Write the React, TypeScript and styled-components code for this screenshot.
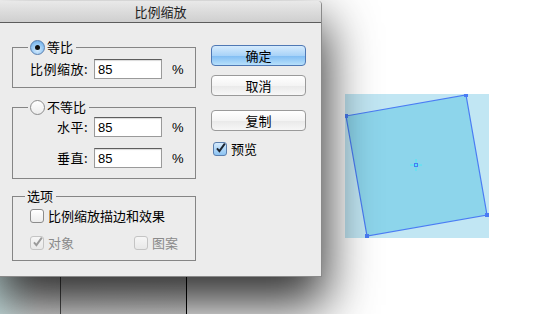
import React from "react";
import styled, { createGlobalStyle, css } from "styled-components";

const GlobalStyle = createGlobalStyle`
  html, body {
    margin: 0;
    padding: 0;
    background: #fff;
  }
  body {
    font-family: "Noto Sans CJK SC", "Liberation Sans", sans-serif;
    font-size: 13px;
    color: #000;
  }
`;

const Workspace = styled.div`
  position: relative;
  width: 534px;
  height: 314px;
  overflow: hidden;
  background: #fff;
`;

const BackPanel = styled.div`
  position: absolute;
  left: 0;
  top: 250px;
  width: 186px;
  height: 64px;
  display: flex;
  border-right: 1px solid #000;
  background: linear-gradient(90deg, #cfe6e6 0, #e8e8e8 40px, #ececec 100%);
`;

const BackColumn = styled.div`
  width: 60px;
  border-right: 1px solid #555;
`;

const Artwork = styled.svg`
  position: absolute;
  left: 345px;
  top: 94px;
`;

const Dialog = styled.div`
  position: absolute;
  left: 0;
  top: 1px;
  width: 321px;
  background: #ececec;
  border-right: 1px solid #8a8a8a;
  border-bottom: 1px solid #8a8a8a;
  border-top-right-radius: 4px;
  box-shadow: 0 24px 50px 4px rgba(0, 0, 0, 0.8);
  z-index: 2;
`;

const TitleBar = styled.div`
  height: 21px;
  display: flex;
  align-items: center;
  justify-content: center;
  border-top-right-radius: 4px;
  background: linear-gradient(#e9e9e9, #cfcfcf);
  border-bottom: 1px solid #5c5c5c;
  font-size: 13px;
  color: #222;
`;

const Body = styled.div`
  display: flex;
  gap: 15px;
  padding: 16px 15px 15px 12px;
`;

const LeftColumn = styled.div`
  width: 184px;
  display: flex;
  flex-direction: column;
`;

const Group = styled.fieldset<{ $mt?: number; $pt: number; $pb: number }>`
  margin: ${(p) => p.$mt ?? 0}px 0 0 0;
  padding: ${(p) => p.$pt}px 0 ${(p) => p.$pb}px 0;
  border: 1px solid #858585;
  min-width: 0;
  display: flex;
  flex-direction: column;
`;

const Legend = styled.legend<{ $ml: number }>`
  margin-left: ${(p) => p.$ml}px;
  padding: 0 3px 0 2px;
  height: 16px;
  line-height: 16px;
  display: flex;
  align-items: center;
  gap: 2px;
  font-size: 13px;
`;

const Radio = styled.span<{ $on?: boolean }>`
  position: relative;
  width: 15px;
  height: 15px;
  border-radius: 50%;
  box-sizing: border-box;
  ${(p) =>
    p.$on
      ? css`
          border: 1px solid #5b7fae;
          background: radial-gradient(circle at 50% 70%, #d9edfd 0, #9fcdf5 45%, #5fa5e6 100%);
          &::after {
            content: "";
            position: absolute;
            left: 4px;
            top: 4px;
            width: 5px;
            height: 5px;
            border-radius: 50%;
            background: #111;
          }
        `
      : css`
          border: 1px solid #8c8c8c;
          background: linear-gradient(#ffffff, #ececec);
        `}
`;

const FieldRow = styled.div<{ $mt?: number }>`
  display: flex;
  align-items: center;
  margin-top: ${(p) => p.$mt ?? 0}px;
`;

const FieldLabel = styled.span`
  width: 75px;
  text-align: right;
  margin-right: 6px;
  font-size: 13px;
  line-height: 20px;
  letter-spacing: 0.5px;
`;

const NumberInput = styled.input`
  width: 68px;
  height: 20px;
  box-sizing: border-box;
  border: 1px solid #9a9a9a;
  border-top-color: #5e5e5e;
  box-shadow: inset 0 1px 1px rgba(0, 0, 0, 0.15);
  padding: 0 0 0 3px;
  margin: 0;
  font-family: "Liberation Sans", sans-serif;
  font-size: 13px;
  color: #000;
  background: #fff;
  outline: none;
`;

const Unit = styled.span`
  margin-left: 10px;
  font-family: "Liberation Sans", sans-serif;
  font-size: 13px;
`;

const CheckRow = styled.div<{ $mt?: number }>`
  display: flex;
  align-items: center;
  margin-top: ${(p) => p.$mt ?? 0}px;
  padding-left: 17px;
`;

const CheckItem = styled.label<{ $disabled?: boolean; $w?: number }>`
  display: flex;
  align-items: center;
  gap: 4px;
  width: ${(p) => (p.$w ? `${p.$w}px` : "auto")};
  font-size: 13px;
  line-height: 16px;
  color: ${(p) => (p.$disabled ? "#8a8a8a" : "#000")};
`;

const Box = styled.span<{ $variant: "off" | "on" | "disabledOn" | "disabledOff" }>`
  width: 14px;
  height: 14px;
  box-sizing: border-box;
  border-radius: 3px;
  display: flex;
  align-items: center;
  justify-content: center;
  overflow: visible;
  ${(p) =>
    p.$variant === "on"
      ? css`
          border: 1px solid #5b7fae;
          background: linear-gradient(#d6ebfd, #8cc3f2);
        `
      : p.$variant === "off"
      ? css`
          border: 1px solid #8c8c8c;
          background: linear-gradient(#ffffff, #ececec);
        `
      : css`
          border: 1px solid #c4c4c4;
          background: linear-gradient(#f6f6f6, #e8e8e8);
        `}
`;

const RightColumn = styled.div`
  width: 95px;
  display: flex;
  flex-direction: column;
  padding-top: 6px;
`;

const Button = styled.button<{ $primary?: boolean; $mt?: number }>`
  height: 21px;
  margin: ${(p) => p.$mt ?? 0}px 0 0 0;
  padding: 0;
  border-radius: 4px;
  font-family: "Noto Sans CJK SC", sans-serif;
  font-size: 13px;
  line-height: 19px;
  color: #000;
  cursor: default;
  ${(p) =>
    p.$primary
      ? css`
          border: 1px solid #4f78b4;
          background: linear-gradient(#d5ebfd 0, #a9d3f8 50%, #7fbcf3 51%, #b7e0fb 100%);
        `
      : css`
          border: 1px solid #9a9a9a;
          background: linear-gradient(#ffffff 0, #f4f4f4 50%, #e9e9e9 51%, #f7f7f7 100%);
        `}
`;

const PreviewRow = styled.label`
  display: flex;
  align-items: center;
  gap: 4px;
  margin-top: 10px;
  padding-left: 2px;
  font-size: 13px;
  line-height: 16px;
`;

const Check = ({ color }: { color: string }) => (
  <svg width="14" height="14" viewBox="0 0 14 14" style={{ marginTop: -3, marginLeft: 1 }}>
    <path d="M2.5 7.5 L5.6 11 L12.5 1.5" fill="none" stroke={color} strokeWidth="2.4" strokeLinejoin="miter" />
  </svg>
);

const corners = "1,22 121,1 142,121 22,142";

export default function App() {
  return (
    <Workspace>
      <GlobalStyle />
      <BackPanel>
        <BackColumn />
      </BackPanel>

      <Artwork width="144" height="144" viewBox="0 0 144 144">
        <rect x="0" y="0" width="144" height="144" fill="#c1e6f3" />
        <polygon points={corners} fill="#8dd5eb" stroke="#4a7cf4" strokeWidth="1.2" />
        {[
          [1, 22],
          [121, 1],
          [142, 121],
          [22, 142],
        ].map(([x, y]) => (
          <rect key={`${x}-${y}`} x={x - 2} y={y - 2} width="4" height="4" fill="#4a7cf4" />
        ))}
        <line x1="71" y1="65" x2="71" y2="77" stroke="#4fe8f5" strokeWidth="1" />
        <line x1="65" y1="71" x2="77" y2="71" stroke="#4fe8f5" strokeWidth="1" />
        <rect x="69.5" y="69.5" width="3" height="3" fill="none" stroke="#4a7cf4" strokeWidth="1" />
      </Artwork>

      <Dialog>
        <TitleBar>比例缩放</TitleBar>
        <Body>
          <LeftColumn>
            <Group $pt={4} $pb={8}>
              <Legend $ml={15}>
                <Radio $on />
                等比
              </Legend>
              <FieldRow>
                <FieldLabel>比例缩放:</FieldLabel>
                <NumberInput defaultValue="85" />
                <Unit>%</Unit>
              </FieldRow>
            </Group>

            <Group $mt={11} $pt={2} $pb={10}>
              <Legend $ml={15}>
                <Radio />
                不等比
              </Legend>
              <FieldRow>
                <FieldLabel>水平:</FieldLabel>
                <NumberInput defaultValue="85" />
                <Unit>%</Unit>
              </FieldRow>
              <FieldRow $mt={11}>
                <FieldLabel>垂直:</FieldLabel>
                <NumberInput defaultValue="85" />
                <Unit>%</Unit>
              </FieldRow>
            </Group>

            <Group $mt={9} $pt={4} $pb={9}>
              <Legend $ml={12}>选项</Legend>
              <CheckRow>
                <CheckItem>
                  <Box $variant="off" />
                  比例缩放描边和效果
                </CheckItem>
              </CheckRow>
              <CheckRow $mt={11}>
                <CheckItem $disabled $w={104}>
                  <Box $variant="disabledOn">
                    <Check color="#9a9a9a" />
                  </Box>
                  对象
                </CheckItem>
                <CheckItem $disabled>
                  <Box $variant="disabledOff" />
                  图案
                </CheckItem>
              </CheckRow>
            </Group>
          </LeftColumn>

          <RightColumn>
            <Button $primary>确定</Button>
            <Button $mt={9}>取消</Button>
            <Button $mt={14}>复制</Button>
            <PreviewRow>
              <Box $variant="on">
                <Check color="#1c2430" />
              </Box>
              预览
            </PreviewRow>
          </RightColumn>
        </Body>
      </Dialog>
    </Workspace>
  );
}
